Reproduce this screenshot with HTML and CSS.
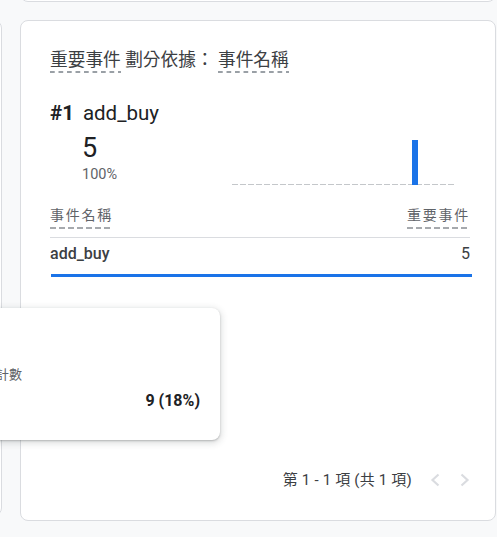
FILE: index.html
```html
<!DOCTYPE html>
<html lang="zh-Hant">
<head>
<meta charset="utf-8">
<link rel="stylesheet" href="styles.css">
</head>
<body>
<div class="page">
  <aside class="side-card"></aside>
  <main class="column">
    <section class="card card-top"></section>
    <section class="card card-main">
      <div class="card-title"><span class="dashed">重要事件</span> 劃分依據： <span class="dashed">事件名稱</span></div>
      <div class="rank-title"><span class="rank">#1</span>add_buy</div>
      <div class="summary">
        <div class="metric">
          <div class="metric-value">5</div>
          <div class="metric-pct">100%</div>
        </div>
        <svg class="spark" width="224" height="51" viewBox="0 0 224 51">
          <line x1="0" y1="50.5" x2="224" y2="50.5" stroke="#c4c7ca" stroke-width="1" stroke-dasharray="6 2"/>
          <rect x="180" y="6" width="6" height="45" fill="#1a73e8"/>
        </svg>
      </div>
      <div class="table-head">
        <span class="dashed th">事件名稱</span>
        <span class="dashed th">重要事件</span>
      </div>
      <div class="table-row">
        <span class="cell-name">add_buy</span>
        <span class="cell-value">5</span>
      </div>
      <div class="row-bar"></div>
      <div class="pager">
        <span class="pager-text">第 1 - 1 項 (共 1 項)</span>
        <svg class="chev chev-prev" width="10" height="14" viewBox="0 0 10 14"><polyline points="8.5,1.5 2.5,7 8.5,12.5" fill="none" stroke="#dadce0" stroke-width="2.2"/></svg>
        <svg class="chev chev-next" width="10" height="14" viewBox="0 0 10 14"><polyline points="1.5,1.5 7.5,7 1.5,12.5" fill="none" stroke="#dadce0" stroke-width="2.2"/></svg>
      </div>
    </section>
  </main>
</div>
<div class="tooltip">
  <div class="tip-label">事件計數</div>
  <div class="tip-value">9 (18%)</div>
</div>
</body>
</html>
```
FILE: styles.css
```css
html, body {
  margin: 0;
  padding: 0;
}
body {
  width: 497px;
  height: 537px;
  overflow: hidden;
  background: #f8f9fa;
  font-family: Roboto, "Noto Sans CJK TC", sans-serif;
  color: #3c4043;
  position: relative;
}
.page {
  display: flex;
  gap: 18px;
  padding-right: 1px;
}
.side-card {
  flex: 0 0 100px;
  margin-left: -98px;
  margin-top: 20px;
  height: 496px;
  box-sizing: border-box;
  background: #fff;
  border: 1px solid #dadce0;
  border-radius: 8px;
}
.column {
  flex: 1;
  display: flex;
  flex-direction: column;
  gap: 18px;
}
.card {
  background: #fff;
  border: 1px solid #dadce0;
  border-radius: 8px;
  box-sizing: border-box;
}
.card-top {
  height: 100px;
  margin-top: -98px;
}
.card-main {
  height: 501px;
  display: flex;
  flex-direction: column;
  padding: 29px 25px 30px 29px;
}
.dashed {
  display: inline-block;
  background-image: linear-gradient(to right, #9aa0a6 5px, transparent 5px);
  background-size: 8.5px 2px;
  background-repeat: repeat-x;
  background-position: left bottom;
}
.card-title {
  font-size: 17.7px;
  line-height: 20px;
  color: #3c4043;
}
.card-title .dashed {
  padding-bottom: 3px;
}
.rank-title {
  margin-top: 28px;
  font-size: 20.5px;
  line-height: 24px;
  font-weight: 400;
  color: #202124;
}
.rank {
  font-weight: 700;
  margin-right: 9px;
}
.summary {
  display: flex;
  align-items: flex-end;
  margin-top: 7px;
}
.metric {
  margin-left: 32px;
  padding-bottom: 1px;
}
.metric-value {
  font-size: 27px;
  line-height: 32px;
  color: #202124;
}
.metric-pct {
  margin-top: 2px;
  font-size: 14.5px;
  line-height: 18px;
  color: #5f6368;
}
.spark {
  display: block;
  margin-left: auto;
  margin-right: 14px;
}
.table-head {
  margin-top: 20px;
  display: flex;
  justify-content: space-between;
  align-items: flex-start;
  padding-bottom: 8px;
  border-bottom: 1px solid #dadce0;
}
.th {
  font-size: 14px;
  line-height: 20px;
  letter-spacing: 1.75px;
  color: #5f6368;
  padding-bottom: 4px;
  background-image: linear-gradient(to right, #a6a9ad 6px, transparent 6px);
  background-size: 9px 2px;
}
.table-row {
  display: flex;
  justify-content: space-between;
  padding-top: 6px;
  font-size: 16px;
  line-height: 20px;
  color: #3c4043;
}
.cell-name {
  font-weight: 500;
}
.row-bar {
  margin-top: 10px;
  margin-left: 1px;
  margin-right: -2px;
  height: 3px;
  background: #1a73e8;
}
.pager {
  margin-top: auto;
  display: flex;
  justify-content: flex-end;
  align-items: center;
  font-size: 15px;
  line-height: 20px;
  letter-spacing: 0.2px;
  color: #3c4043;
}
.chev {
  display: block;
}
.chev-prev {
  margin-left: 18px;
}
.chev-next {
  margin-left: 20px;
}
.tooltip {
  position: absolute;
  left: -80px;
  top: 308px;
  width: 300px;
  height: 132px;
  box-sizing: border-box;
  padding: 58px 20px 0 50px;
  background: #fff;
  border-radius: 8px;
  box-shadow: 0 1px 2px rgba(60, 64, 67, 0.3), 0 2px 6px 2px rgba(60, 64, 67, 0.15);
  display: flex;
  flex-direction: column;
}
.tip-label {
  font-size: 13px;
  line-height: 18px;
  color: #5f6368;
}
.tip-value {
  margin-top: 7px;
  text-align: right;
  font-size: 16px;
  line-height: 20px;
  font-weight: 700;
  color: #202124;
}
```
